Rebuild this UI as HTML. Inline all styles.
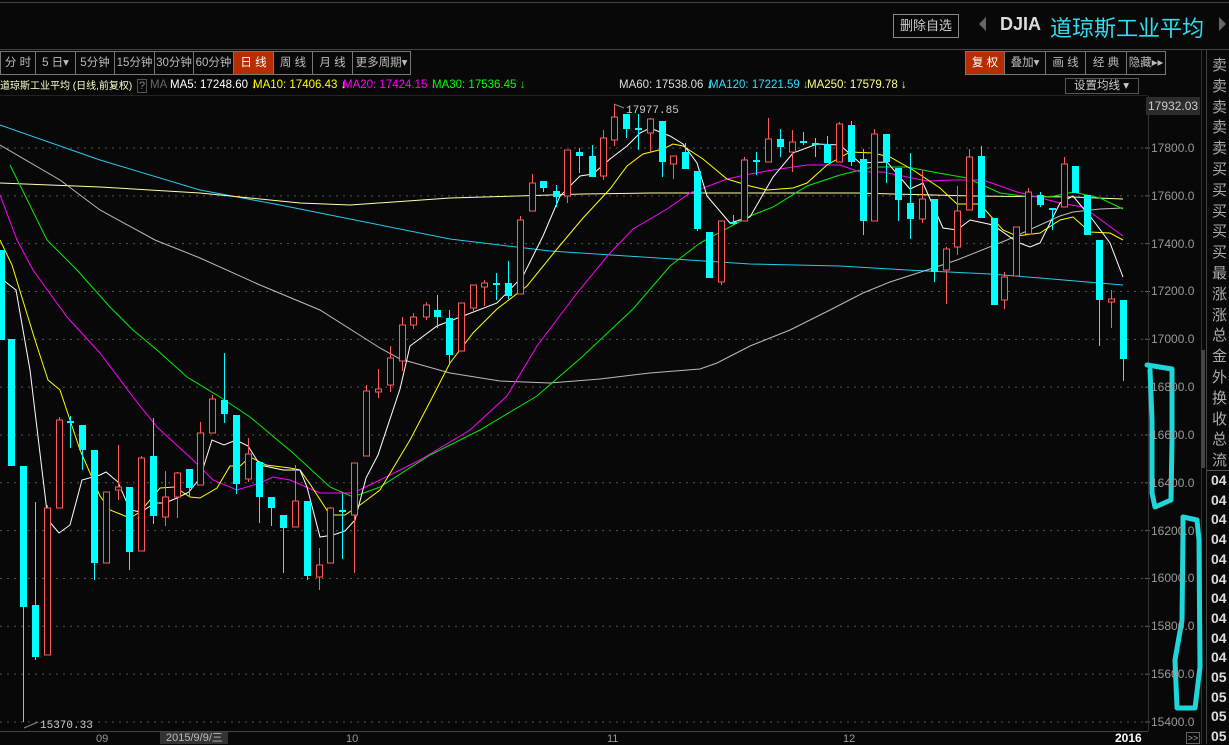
<!DOCTYPE html>
<html><head><meta charset="utf-8"><style>
*{margin:0;padding:0;box-sizing:border-box}
body{width:1229px;height:744px;background:#080808;overflow:hidden;position:relative;font-family:"Liberation Sans","Noto Sans CJK SC",sans-serif;color:#ccc}
.a{position:absolute;white-space:nowrap}
.tb{position:absolute;top:51px;height:24px;border:1px solid #777;border-right:none;font-size:11.5px;line-height:22px;text-align:center;color:#bbb;overflow:hidden}
.lg{position:absolute;top:78px;font-size:11.5px;line-height:15px}
</style></head><body>
<div class="a" style="left:0;top:2px;width:1229px;height:1px;background:#444"></div>
<div class="a" style="left:0;top:49px;width:1229px;height:1px;background:#444"></div>
<div class="a" style="left:893px;top:14px;width:66px;height:24px;border:1px solid #888;font-size:13px;line-height:22px;text-align:center;color:#ccc">删除自选</div>
<div class="a" style="left:979px;top:17px;width:0;height:0;border-top:7px solid transparent;border-bottom:7px solid transparent;border-right:7px solid #666"></div>
<div class="a" style="left:1000px;top:14px;font-size:18px;font-weight:bold;color:#ddd">DJIA</div>
<div class="a" style="left:1050px;top:11px;font-size:22px;color:#33ddee;font-family:'Liberation Sans','WenQuanYi Zen Hei',sans-serif">道琼斯工业平均</div>
<div class="a" style="left:1219px;top:17px;width:0;height:0;border-top:7px solid transparent;border-bottom:7px solid transparent;border-left:7px solid #666"></div>

<div class="tb" style="left:0;width:35px">分 时</div>
<div class="tb" style="left:35px;width:40px">5 日▾</div>
<div class="tb" style="left:75px;width:39px">5分钟</div>
<div class="tb" style="left:114px;width:40px">15分钟</div>
<div class="tb" style="left:154px;width:39px">30分钟</div>
<div class="tb" style="left:193px;width:40px">60分钟</div>
<div class="tb" style="left:233px;width:40px;background:#b52d00;color:#fff">日 线</div>
<div class="tb" style="left:273px;width:39px">周 线</div>
<div class="tb" style="left:312px;width:40px">月 线</div>
<div class="tb" style="left:352px;width:59px;border-right:1px solid #777">更多周期▾</div>

<div class="tb" style="left:965px;width:39px;background:#b52d00;color:#fff">复 权</div>
<div class="tb" style="left:1004px;width:41px">叠加▾</div>
<div class="tb" style="left:1045px;width:40px">画 线</div>
<div class="tb" style="left:1085px;width:41px">经 典</div>
<div class="tb" style="left:1126px;width:40px;border-right:1px solid #777">隐藏▸▸</div>

<div class="lg" style="left:0;color:#ffffcc;font-size:10px;top:79px">道琼斯工业平均 (日线,前复权)</div>
<div class="lg" style="left:137px;top:79px;width:10px;height:14px;border:1px solid #555;color:#888;font-size:11px;line-height:12px;text-align:center">?</div>
<div class="lg" style="left:150px;color:#666">MA</div>
<div class="lg" style="left:170px;color:#fff">MA5: 17248.60 ↓</div>
<div class="lg" style="left:253px;color:#ffff00">MA10: 17406.43 ↓</div>
<div class="lg" style="left:343px;color:#ff00ff">MA20: 17424.15 ↓</div>
<div class="lg" style="left:432px;color:#00ff00">MA30: 17536.45 ↓</div>
<div class="lg" style="left:619px;color:#ddd">MA60: 17538.06 ↓</div>
<div class="lg" style="left:709px;color:#33ddff">MA120: 17221.59 ↓</div>
<div class="lg" style="left:807px;color:#ffff88">MA250: 17579.78 ↓</div>
<div class="a" style="left:1065px;top:78px;width:74px;height:16px;border:1px solid #555;font-size:11.5px;line-height:14px;color:#ccc;padding-left:8px">设置均线 ▾</div>

<svg class="a" style="left:0;top:0" width="1229" height="744" id="s"></svg>

<div class="a" style="left:1146px;top:97px;width:54px;height:18px;background:#2c2c2c"></div>
<div class="a" style="left:1148px;top:99px;font-size:12px;color:#ccc">17932.03</div>
<div id="ax"></div>
<div class="a" style="left:1201px;top:350px;width:4px;height:118px;background:#444"></div>

<div class="a" style="left:96px;top:733px;font-size:11px;color:#999">09</div>
<div class="a" style="left:160px;top:732px;width:68px;height:12px;background:#333;font-size:11px;color:#bbb;padding-left:6px;line-height:12px">2015/9/9/三</div>
<div class="a" style="left:346px;top:733px;font-size:11px;color:#999">10</div>
<div class="a" style="left:607px;top:733px;font-size:11px;color:#999">11</div>
<div class="a" style="left:843px;top:733px;font-size:11px;color:#999">12</div>
<div class="a" style="left:1115px;top:731px;font-size:12px;color:#fff;font-weight:bold">2016</div>
<div class="a" style="left:1186px;top:732px;width:14px;height:12px;border:1px solid #666;font-size:9px;color:#aaa;line-height:10px;text-align:center">&gt;&gt;</div>
<div id="rp"></div>

<script>
var s=document.getElementById('s'),h='';
for(var k=0;k<13;k++){var y=148+k*47.83;h+='<line x1="0" y1="'+y+'" x2="1145" y2="'+y+'" stroke="#555" stroke-dasharray="2,5"/>';h+='<line x1="1145" y1="'+y+'" x2="1150" y2="'+y+'" stroke="#666"/>';}
h+='<line x1="1148.5" y1="96" x2="1148.5" y2="731" stroke="#333"/>';
h+='<line x1="1201.5" y1="50" x2="1201.5" y2="744" stroke="#333"/>';
h+='<line x1="1206.5" y1="50" x2="1206.5" y2="744" stroke="#444"/>';
h+='<line x1="0" y1="731.5" x2="1148" y2="731.5" stroke="#444"/>';
h+='<line x1="0" y1="95.5" x2="1148" y2="95.5" stroke="#222"/>';
function pl(p,c){h+='<polyline fill="none" stroke="'+c+'" stroke-width="1" points="'+p+'"/>';}
pl("0,125 100,160 200,190 280,205 350,219 450,239 550,251 750,264 840,266 907,270 990,274 1040,278 1123,285","#22ccee");
pl("0,183 100,187 200,193 300,203 350,205 450,198 517,196 583,194 650,193 750,193 857,193 973,196 1073,197 1123,199","#ffffaa");
pl("0,145 60,180 100,210 155,240 200,258 260,285 320,310 380,348 400,359 450,373 500,381 550,383 600,379 650,373 700,369 717,363 750,346 790,330 830,310 863,293 890,282 927,270 957,260 1007,240 1040,225 1060,216 1073,212 1100,209 1123,208","#bbbbbb");
pl("10,165 47,240 77,270 110,307 133,330 157,350 187,377 220,397 250,417 293,453 330,487 353,497 380,487 430,455 480,430 537,396 583,356 633,309 670,266 700,243 750,216 773,207 807,186 840,175 873,167 907,167 933,172 967,178 1000,193 1023,196 1050,197 1073,192 1100,198 1123,209","#00ee00");
pl("0,195 17,240 33,270 67,317 100,353 133,397 157,427 193,460 213,480 237,490 260,483 273,477 290,480 320,493 353,493 380,480 420,460 470,430 507,396 537,346 577,293 610,253 633,229 667,209 690,193 727,179 750,174 773,170 807,165 840,165 860,172 883,172 927,181 953,180 983,180 1017,192 1033,196 1060,203 1083,207 1097,217 1123,236","#ff00ff");
pl("0,240 12,265 35,340 48,380 60,390 80,450 100,496 110,510 130,518 140,512 160,488 175,487 190,497 200,498 217,488 230,466 240,466 250,457 266,465 290,468 300,470 310,484 330,515 345,515 360,505 380,490 410,440 433,396 450,363 473,333 497,309 527,286 557,249 583,218 610,189 627,166 643,154 663,149 673,144 683,146 703,159 727,179 750,186 767,190 793,188 807,183 827,165 850,152 873,153 890,157 913,170 940,188 957,204 980,204 1003,230 1017,236 1040,233 1060,220 1073,217 1090,232 1110,233 1123,240","#ffff00");
pl("3,280 16,290 30,370 48,520 59,533 70,525 82,480 100,475 106,472 118,482 130,510 141,512 155,503 165,503 177,498 189,492 200,478 212,440 224,445 236,440 248,446 260,465 283,470 300,470 307,487 320,537 333,535 345,531 355,520 366,478 378,455 400,389 410,346 437,326 497,303 523,276 543,236 560,196 580,176 593,174 610,159 627,146 640,133 650,128 670,136 683,144 697,163 707,196 730,223 750,217 773,177 793,153 817,144 840,145 860,163 887,162 910,189 923,183 943,228 957,230 970,220 993,225 1017,242 1030,247 1040,243 1060,203 1073,196 1093,220 1110,243 1123,277","#ffffff");
var C=[[1,250,340,250,340],[11,339,466,339,466],[23,466,607,466,722],[35,605,657,502,660],[47,655,508,505,655],[59,508,420,417,508],[70,421,422,416,448],[82,425,450,425,470],[94,450,563,450,580],[106,563,492,492,563],[118,490,487,445,500],[129,487,552,487,570],[141,551,458,456,551],[153,456,516,418,524],[165,517,497,471,526],[177,497,473,472,518],[189,469,488,469,497],[200,485,433,422,485],[212,433,399,395,433],[224,400,414,353,423],[236,415,484,415,494],[248,479,454,438,482],[259,462,497,462,523],[271,497,508,497,526],[283,515,528,515,573],[295,527,501,465,527],[307,501,576,501,580],[319,577,565,548,590],[330,563,508,507,563],[342,510,511,493,559],[354,515,463,463,573],[366,456,391,385,456],[378,392,389,369,398],[390,385,358,346,392],[402,361,325,317,371],[413,325,317,313,329],[426,317,305,302,320],[437,310,317,295,328],[449,318,355,310,363],[461,351,303,303,351],[473,308,285,285,311],[484,287,283,280,306],[496,283,285,273,300],[508,283,296,261,299],[520,294,220,216,294],[532,211,183,174,211],[543,181,188,181,192],[556,191,197,185,207],[567,196,150,150,203],[579,152,156,148,173],[592,156,177,145,177],[603,176,138,130,180],[614,140,117,104,146],[626,114,129,114,138],[638,128,130,114,150],[650,133,119,118,152],[662,121,162,121,177],[673,164,156,156,179],[685,152,169,143,169],[697,171,229,171,231],[709,232,278,232,278],[721,282,221,221,285],[733,222,222,215,225],[744,221,160,157,221],[756,160,161,152,175],[768,162,139,118,162],[780,139,147,129,157],[792,152,142,130,172],[803,141,142,132,145],[815,143,144,138,157],[827,144,163,136,163],[839,162,124,122,162],[851,125,162,121,166],[863,159,221,149,235],[874,221,134,129,221],[886,134,162,134,183],[898,168,200,168,221],[910,203,219,153,239],[922,219,199,170,223],[934,199,272,199,282],[946,270,249,247,304],[957,247,211,186,255],[969,210,157,149,210],[981,156,218,146,218],[994,218,305,218,305],[1004,300,277,272,309],[1016,276,227,229,276],[1028,234,192,188,234],[1040,195,205,192,207],[1052,208,210,208,230],[1064,207,164,157,207],[1075,166,193,166,193],[1087,195,235,195,235],[1099,240,300,240,346],[1111,302,299,290,328],[1123,300,359,300,381]];
C.forEach(function(c){var x=c[0],o=c[1],cl=c[2],hi=c[3],lo=c[4];
 if(cl<o){
  h+='<line x1="'+(x+.5)+'" y1="'+hi+'" x2="'+(x+.5)+'" y2="'+cl+'" stroke="#ff5a5a"/><line x1="'+(x+.5)+'" y1="'+o+'" x2="'+(x+.5)+'" y2="'+lo+'" stroke="#ff5a5a"/>';
  h+='<rect x="'+(x-2.5)+'" y="'+cl+'" width="6" height="'+Math.max(1,o-cl)+'" fill="#080808" stroke="#ff5a5a"/>';
 } else {
  h+='<line x1="'+(x+.5)+'" y1="'+hi+'" x2="'+(x+.5)+'" y2="'+lo+'" stroke="#00ffff"/>';
  h+='<rect x="'+(x-3)+'" y="'+o+'" width="7" height="'+Math.max(2,cl-o)+'" fill="#00ffff"/>';
 }});
h+='<text x="626" y="113" fill="#ccc" font-size="11" font-family="Liberation Mono,monospace">17977.85</text><line x1="614" y1="104" x2="624" y2="108" stroke="#888"/>';
h+='<text x="40" y="728" fill="#ccc" font-size="11" font-family="Liberation Mono,monospace">15370.33</text><line x1="24" y1="728" x2="38" y2="722" stroke="#888"/>';
h+='<path d="M1147 365 L1172 369 L1172 440 L1171 500 L1155 507 L1152 493 L1152 420 L1150 370" fill="none" stroke="#1fd6d8" stroke-width="5" stroke-linejoin="round" stroke-linecap="round"/>';
h+='<path d="M1183 533 L1183 517 L1197 520 L1199 540 L1200 667 L1195 708 L1177 708 L1175 660 L1182 620 L1183 533" fill="none" stroke="#1fd6d8" stroke-width="5" stroke-linejoin="round" stroke-linecap="round"/>';
s.innerHTML=h;
var ax='',L=['17800.0','17600.0','17400.0','17200.0','17000.0','16800.0','16600.0','16400.0','16200.0','16000.0','15800.0','15600.0','15400.0'];
L.forEach(function(t,i){ax+='<div class="a" style="left:1151px;top:'+(141+i*47.83)+'px;font-size:12px;color:#999">'+t+'</div>';});
document.getElementById('ax').innerHTML=ax;
var rp='',R='卖卖卖卖卖买买买买买最涨涨总金外换收总流';
for(var i=0;i<R.length;i++)rp+='<div class="a" style="left:1212px;top:'+(54+i*20.8)+'px;font-size:15px;color:#aaa">'+R[i]+'</div>';
rp+='<div class="a" style="left:1207px;top:470px;width:22px;height:1px;background:#555"></div>';
for(var i=0;i<14;i++)rp+='<div class="a" style="left:1211px;top:'+(472+i*19.7)+'px;font-size:14px;font-weight:bold;color:#ddd">'+(i<10?'04':'05')+'</div>';
document.getElementById('rp').innerHTML=rp;
</script>
</body></html>
